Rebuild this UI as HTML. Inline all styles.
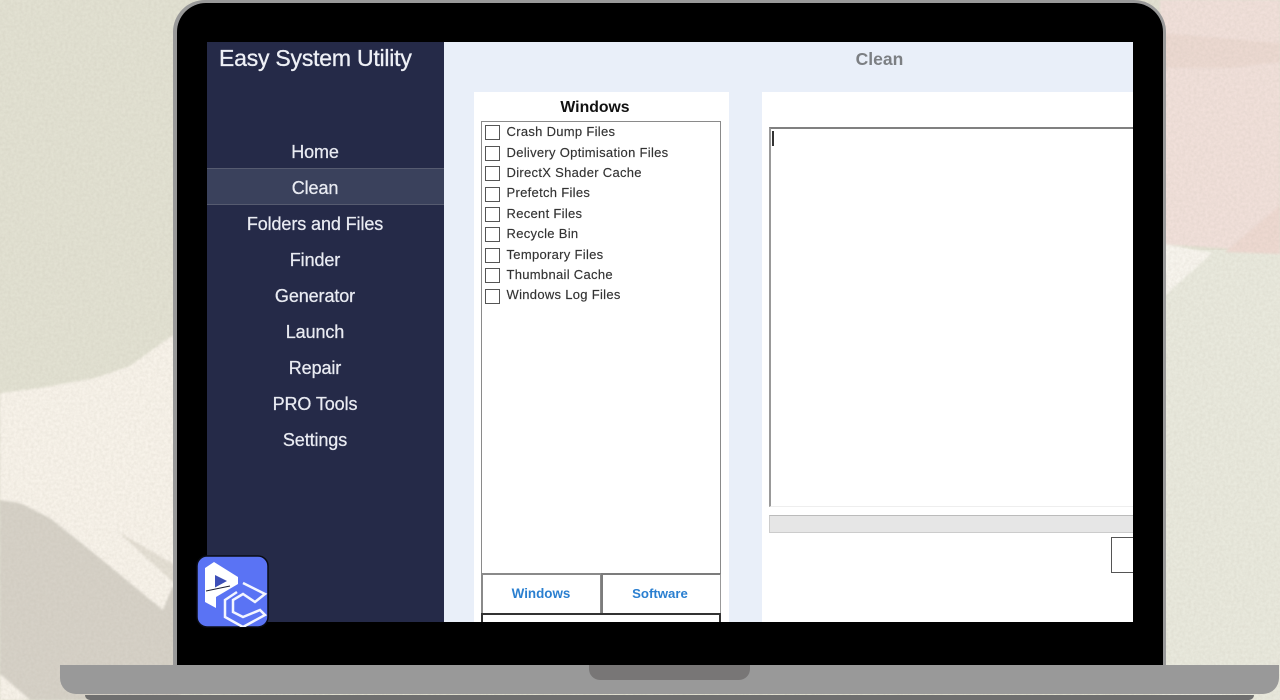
<!DOCTYPE html>
<html><head><meta charset="utf-8"><style>
html,body{margin:0;padding:0;width:1280px;height:700px;overflow:hidden;background:#e2e0d2;font-family:"Liberation Sans",sans-serif}
.a{position:absolute}
.t{position:absolute;white-space:nowrap;line-height:1;filter:blur(.25px)}
.n{color:#e9ebf2;font-size:18px;left:207px;width:216px;text-align:center;letter-spacing:-.1px;-webkit-text-stroke:.25px #e9ebf2}
.l{color:#333;font-size:13px;left:506.5px;letter-spacing:.3px;-webkit-text-stroke:.15px #333}
.c{position:absolute;left:485px;width:12.5px;height:13px;border:1.5px solid #555;background:#fff}
</style></head><body>
<svg class="a" style="left:0;top:0" width="1280" height="700">
<defs><filter id="b"><feGaussianBlur stdDeviation="1"/></filter>
<filter id="g" x="0" y="0" width="100%" height="100%"><feTurbulence type="fractalNoise" baseFrequency=".35" numOctaves="3" seed="4"/><feColorMatrix values="0 0 0 0 .45 0 0 0 0 .42 0 0 0 0 .35 0 0 0 .28 -.07"/></filter></defs>
<rect width="1280" height="700" fill="#e2e1d2"/>
<rect x="1160" y="250" width="120" height="450" fill="#e9e9dd"/>
<g filter="url(#b)">
<polygon points="0,393 40,388 95,378 130,366 173,335 180,335 180,700 0,700" fill="#f8f3ea"/>
<polygon points="0,500 20,503 50,518 90,550 163,610 172,587 180,588 180,700 0,700" fill="#d6d1c7"/>
<polygon points="117,531 175,565 175,584" fill="#e4dfd4"/>
<polygon points="0,674 30,700 0,700" fill="#f7f2e9"/>
<polygon points="1160,0 1280,0 1280,252 1160,244" fill="#f1e0da"/>
<polygon points="1160,33 1280,43 1280,62 1230,68 1160,68" fill="#ecd9d1"/>
<polygon points="1225,252 1280,205 1280,254" fill="#eed9d1"/>
<polygon points="1160,243 1212,253 1160,300" fill="#f8f5ee"/>
</g>
<rect width="1280" height="700" filter="url(#g)"/>
</svg>

<div class="a" style="left:173px;top:0;width:993px;height:680px;background:#999;border-radius:32px 32px 0 0"></div>
<div class="a" style="left:177px;top:3px;width:986px;height:677px;background:#000;border-radius:29px 29px 0 0"></div>

<div class="a" style="left:207px;top:42px;width:926px;height:580px;background:#e9eff9"></div>
<div class="a" style="left:207px;top:42px;width:237px;height:580px;background:#252a48"></div>
<div class="a" style="left:207px;top:168px;width:237px;height:37px;box-sizing:border-box;background:#3a415c;border-top:1px solid #565b70;border-bottom:1px solid #565b70"></div>

<div class="t" style="left:219px;top:47px;font-size:23px;color:#eef0f6;letter-spacing:-.22px;-webkit-text-stroke:.3px #eef0f6">Easy System Utility</div>
<div class="t n" style="top:143px">Home</div>
<div class="t n" style="top:179px">Clean</div>
<div class="t n" style="top:215px">Folders and Files</div>
<div class="t n" style="top:251px">Finder</div>
<div class="t n" style="top:287px">Generator</div>
<div class="t n" style="top:323px">Launch</div>
<div class="t n" style="top:359px">Repair</div>
<div class="t n" style="top:395px">PRO Tools</div>
<div class="t n" style="top:431px">Settings</div>

<div class="t" style="left:626px;width:507px;text-align:center;top:51px;font-size:17.5px;font-weight:bold;color:#7c7f83">Clean</div>

<div class="a" style="left:474px;top:92px;width:255px;height:530px;background:#fff"></div>
<div class="t" style="left:474px;width:242px;text-align:center;top:100px;font-size:15.8px;font-weight:bold;color:#111">Windows</div>
<div class="a" style="left:481px;top:121px;width:240px;height:453px;box-sizing:border-box;border:1px solid #8a8a8a;background:#fff"></div>

<div class="c" style="top:125px"></div><div class="t l" style="top:125px">Crash Dump Files</div>
<div class="c" style="top:146px"></div><div class="t l" style="top:145.5px">Delivery Optimisation Files</div>
<div class="c" style="top:166px"></div><div class="t l" style="top:166px">DirectX Shader Cache</div>
<div class="c" style="top:187px"></div><div class="t l" style="top:186px">Prefetch Files</div>
<div class="c" style="top:207px"></div><div class="t l" style="top:206.5px">Recent Files</div>
<div class="c" style="top:227px"></div><div class="t l" style="top:227px">Recycle Bin</div>
<div class="c" style="top:248px"></div><div class="t l" style="top:247.5px">Temporary Files</div>
<div class="c" style="top:268px"></div><div class="t l" style="top:268px">Thumbnail Cache</div>
<div class="c" style="top:289px"></div><div class="t l" style="top:288px">Windows Log Files</div>

<div class="a" style="left:481px;top:573px;width:121px;height:41px;box-sizing:border-box;border:2px solid #8a8a8a;border-bottom:1px solid #999;background:#fff"></div>
<div class="a" style="left:601px;top:573px;width:120px;height:41px;box-sizing:border-box;border:2px solid #7c7c7c;border-bottom:1px solid #999;border-right:1px solid #999;background:#fff"></div>
<div class="t" style="left:481px;width:120px;text-align:center;top:587px;font-size:13.4px;font-weight:bold;color:#2a7fd0">Windows</div>
<div class="t" style="left:601px;width:118px;text-align:center;top:587px;font-size:13.2px;font-weight:bold;color:#2a7fd0">Software</div>
<div class="a" style="left:481px;top:613px;width:240px;height:9px;box-sizing:border-box;border:2px solid #333;border-bottom:0;background:#fff"></div>

<div class="a" style="left:762px;top:92px;width:371px;height:530px;background:#fff"></div>
<div class="a" style="left:769px;top:127px;width:364px;height:380px;box-sizing:border-box;border-top:2px solid #808080;border-left:2px solid #999;border-bottom:1px solid #eee;background:#fff"></div>
<div class="a" style="left:772px;top:131px;width:1.5px;height:15px;background:#333"></div>
<div class="a" style="left:769px;top:515px;width:364px;height:18px;box-sizing:border-box;background:#e6e6e6;border-top:1px solid #bbb;border-left:1px solid #ccc;border-bottom:1px solid #ccc"></div>
<div class="a" style="left:1111px;top:537px;width:22px;height:36px;box-sizing:border-box;border:1.5px solid #555;border-right:0;background:#fff"></div>

<div class="a" style="left:60px;top:665px;width:1219px;height:29px;background:#999;border-radius:0 0 16px 16px"></div>
<div class="a" style="left:85px;top:694.5px;width:1169px;height:5.5px;background:#6f6f6f;border-radius:0 0 5px 5px"></div>
<div class="a" style="left:589px;top:665px;width:161px;height:14.5px;background:#787676;border-radius:0 0 11px 11px"></div>

<svg class="a" style="left:196px;top:555px" width="74" height="74" viewBox="196 555 74 74">
<clipPath id="k"><rect x="197" y="556" width="71" height="71" rx="10"/></clipPath>
<rect x="197" y="556" width="71" height="71" rx="10" fill="#5a73f4" stroke="#0a0c14" stroke-width="1.5"/>
<polygon points="205,568 214,562 238,577 238,584 216,597 216,608 205,602" fill="#fff"/>
<polygon points="215,575 227,581 215,587.5" fill="#3d4fb8"/>
<path d="M206,591 L230,586" stroke="#1a1c30" stroke-width="1" fill="none"/>
<g clip-path="url(#k)"><path d="M243,583 L265,594 L255,602 L243,594 L233,600 L233,612 L243,617 L260,610 L265,615 L243,627 L225,617 L225,600 L237,592" fill="none" stroke="#f4f6ff" stroke-width="2.5" stroke-linejoin="miter"/></g>
</svg>
</body></html>
